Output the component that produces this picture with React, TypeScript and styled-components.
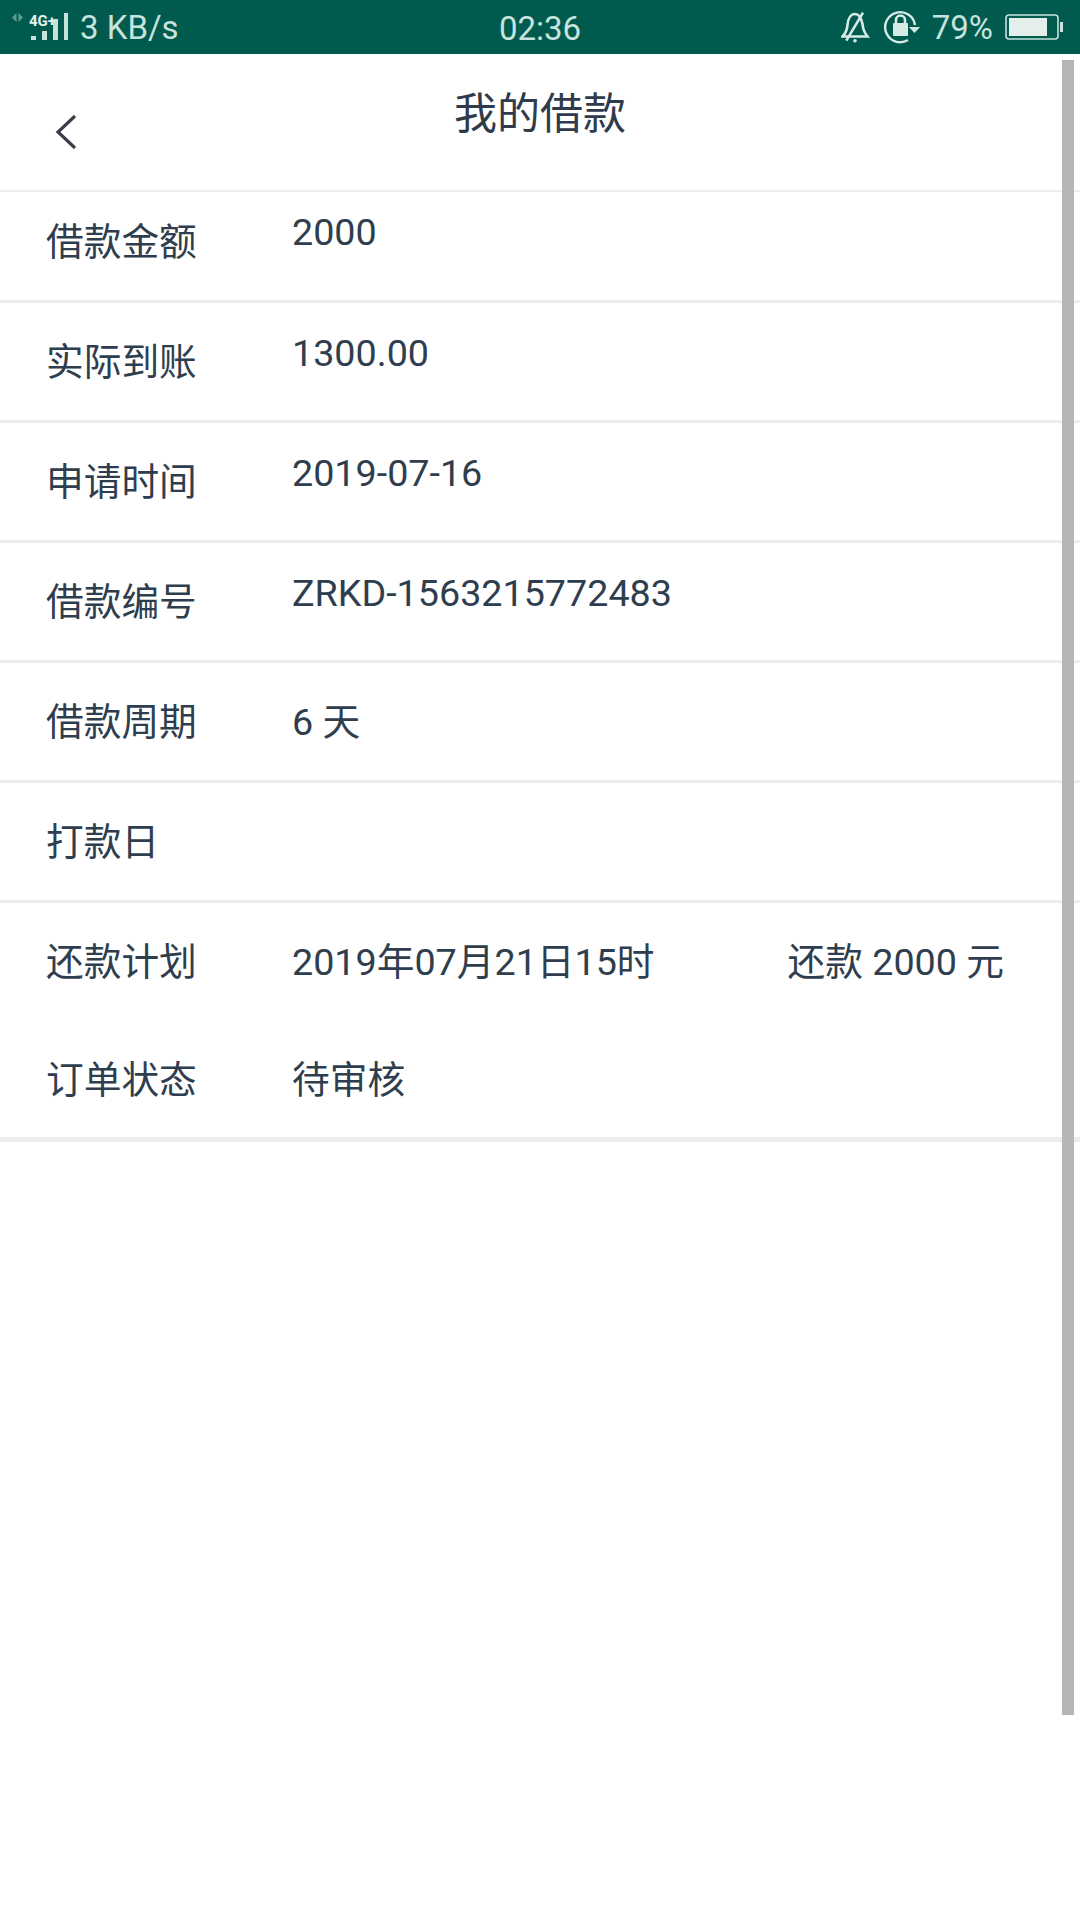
import styled, { createGlobalStyle } from "styled-components";

const GlobalStyle = createGlobalStyle`
  html, body {
    margin: 0;
    padding: 0;
    background: #fff;
  }
  body {
    font-family: Roboto, "Noto Sans CJK SC", sans-serif;
  }
`;

const Page = styled.div`
  position: relative;
  width: 1080px;
  height: 1920px;
  overflow: hidden;
  background: #fff;
`;

const StatusBar = styled.div`
  display: grid;
  grid-template-columns: 1fr auto 1fr;
  align-items: center;
  height: 54px;
  background: #005a4e;
  color: #c6e3dd;
  font-size: 33px;
`;

const StatusLeft = styled.div`
  display: flex;
  align-items: center;
  gap: 10px;
  padding-left: 10px;
`;

const StatusRight = styled.div`
  display: flex;
  align-items: center;
  justify-content: flex-end;
  padding-right: 17px;
`;

const Clock = styled.div`
  padding-top: 2px;
`;

const Percent = styled.span`
  margin: 0 12px 0 11px;
`;

const LockSlot = styled.span`
  display: flex;
  margin-left: 12px;
`;

const Header = styled.header`
  display: grid;
  grid-template-columns: 1fr auto 1fr;
  height: 138px;
  border-bottom: 2px solid #eeeeee;
  box-sizing: border-box;
`;

const Back = styled.div`
  padding: 61px 0 0 55px;
`;

const Title = styled.h1`
  margin: 35px 0 0;
  font-size: 43px;
  line-height: 50px;
  font-weight: 400;
  color: #2f3b4a;
`;

const Row = styled.div<{ $height: number; $border?: number }>`
  display: flex;
  align-items: center;
  box-sizing: border-box;
  height: ${(p) => p.$height}px;
  padding: 0 76px 0 46px;
  border-bottom: ${(p) => p.$border ?? 3}px solid #ececec;
  color: #2f3e4e;
  font-size: 37.7px;
`;

const PlainRow = styled(Row)`
  padding-bottom: 5px;
  border-bottom: none;
`;

const Label = styled.div<{ $lift?: number }>`
  width: 246px;
  flex: none;
  padding-bottom: ${(p) => p.$lift ?? 0}px;
`;

const Value = styled.div<{ $lift?: number }>`
  flex: 1;
  padding-bottom: ${(p) => p.$lift ?? 0}px;
`;

const Amount = styled.div`
  flex: none;
`;

const ScrollThumb = styled.div`
  position: absolute;
  top: 60px;
  left: 1062px;
  width: 12px;
  height: 1655px;
  background: #b5b5b5;
`;

const rows = [
  { label: "借款金额", value: "2000", height: 111, labelLift: 15, lift: 28 },
  { label: "实际到账", value: "1300.00", height: 120, labelLift: 6, lift: 18 },
  { label: "申请时间", value: "2019-07-16", height: 120, labelLift: 6, lift: 18 },
  { label: "借款编号", value: "ZRKD-1563215772483", height: 120, labelLift: 6, lift: 18 },
  { label: "借款周期", value: "6 天", height: 120, labelLift: 6, lift: 6 },
  { label: "打款日", value: "", height: 120, labelLift: 6, lift: 6 },
];

const NetworkIcon = () => (
  <svg width="60" height="40" viewBox="0 0 60 40">
    <path d="M6.500 6v9L2 10.500zM8.500 6v9L13 10.500z" fill="#5f9c90" />
    <text x="19" y="19" fontSize="15" fontWeight="700" fill="#e6f2ef" fontFamily="Roboto, sans-serif">
      4G+
    </text>
    <g fill="#c6e3dd">
      <rect x="21" y="29" width="5" height="4" />
      <rect x="32" y="24" width="5" height="9" />
      <rect x="43" y="12" width="5" height="21" />
      <rect x="54" y="6" width="4" height="27" />
    </g>
  </svg>
);

const BellOffIcon = () => (
  <svg width="30" height="32" viewBox="0 0 30 32" fill="none" stroke="#d6ebe6" strokeWidth="2.600">
    <path d="M1.500 25.500C5 22 6 19 6.500 14 7 7 10 3 14 3c4 0 6 3 7.500 10 .5 6 2 9 5 12.500z" />
    <path d="M22 1.700L5.300 29.700" />
    <circle cx="14" cy="29.700" r="1.800" fill="#d6ebe6" stroke="none" />
  </svg>
);

const RotateLockIcon = () => (
  <svg width="38" height="34" viewBox="0 0 38 34" fill="none">
    <path d="M32 15A15 15 0 1 0 25 30" stroke="#d6ebe6" strokeWidth="2.400" />
    <path d="M26 17h11l-5.500 6z" fill="#d6ebe6" />
    <rect x="10" y="13" width="15" height="13" rx="1" fill="#d6ebe6" />
    <path d="M13 13v-3a4.500 4.500 0 0 1 9 0v3" stroke="#d6ebe6" strokeWidth="2.600" />
  </svg>
);

const BatteryIcon = () => (
  <svg width="58" height="26" viewBox="0 0 58 26" fill="none">
    <rect x="1" y="1" width="52" height="24" rx="3" stroke="#c6e3dd" strokeWidth="1.600" />
    <rect x="4" y="4" width="38" height="18" fill="#e4efec" />
    <rect x="55" y="8" width="3" height="10" fill="#c6e3dd" />
  </svg>
);

const BackIcon = () => (
  <svg width="22" height="34" viewBox="0 0 22 34" fill="none" stroke="#3d3a4a" strokeWidth="3.200">
    <path d="M20 1L3 17l17 16" />
  </svg>
);

const App = () => {
  return (
    <Page>
      <GlobalStyle />
      <StatusBar>
        <StatusLeft>
          <NetworkIcon />
          <span>3 KB/s</span>
        </StatusLeft>
        <Clock>02:36</Clock>
        <StatusRight>
          <BellOffIcon />
          <LockSlot>
            <RotateLockIcon />
          </LockSlot>
          <Percent>79%</Percent>
          <BatteryIcon />
        </StatusRight>
      </StatusBar>
      <Header>
        <Back>
          <BackIcon />
        </Back>
        <Title>我的借款</Title>
      </Header>
      {rows.map((row) => (
        <Row key={row.label} $height={row.height}>
          <Label $lift={row.labelLift}>{row.label}</Label>
          <Value $lift={row.lift}>{row.value}</Value>
        </Row>
      ))}
      <PlainRow $height={115}>
        <Label>还款计划</Label>
        <Value>2019年07月21日15时</Value>
        <Amount>还款 2000 元</Amount>
      </PlainRow>
      <Row $height={124} $border={5}>
        <Label $lift={2}>订单状态</Label>
        <Value $lift={2}>待审核</Value>
      </Row>
      <ScrollThumb />
    </Page>
  );
};

export default App;
